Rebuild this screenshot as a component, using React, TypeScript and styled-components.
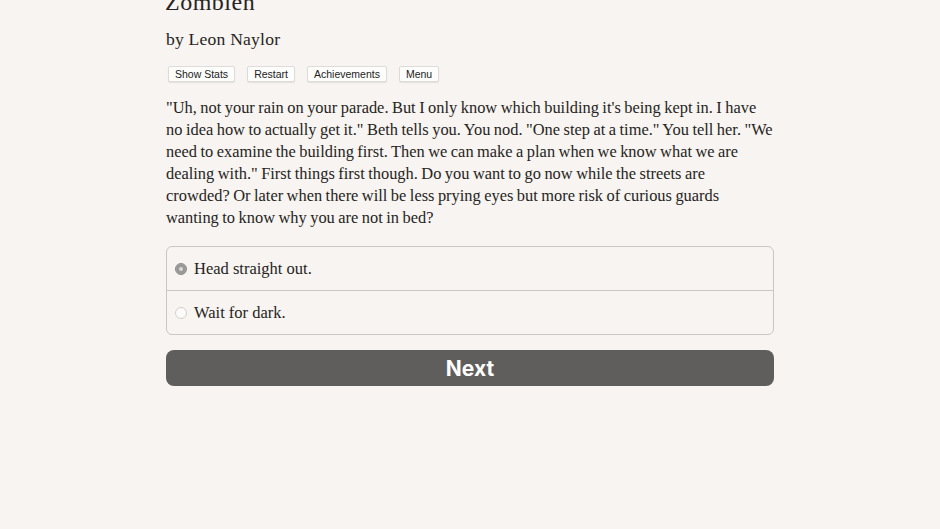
import React, { useState } from 'react'
import styled, { createGlobalStyle } from 'styled-components'

const GlobalStyle = createGlobalStyle`
  html, body {
    margin: 0;
    padding: 0;
    background: #f7f4f1;
  }
  body {
    font-family: 'Liberation Serif', 'DejaVu Serif', serif;
    color: #262422;
    overflow: hidden;
  }
`

const choices = ['Head straight out.', 'Wait for dark.']

const passage = [
  `"Uh, not your rain on your parade. But I only know which building it's being kept in. I have`,
  `no idea how to actually get it." Beth tells you. You nod. "One step at a time." You tell her. "We`,
  `need to examine the building first. Then we can make a plan when we know what we are`,
  `dealing with." First things first though. Do you want to go now while the streets are`,
  `crowded? Or later when there will be less prying eyes but more risk of curious guards`,
  `wanting to know why you are not in bed?`,
]

export default function App() {
  const [selected, setSelected] = useState(0)

  return (
    <>
      <GlobalStyle />
      <Page>
        <Title>Zombien</Title>
        <Author>by Leon Naylor</Author>

        <Toolbar>
          <ToolButton>Show Stats</ToolButton>
          <ToolButton>Restart</ToolButton>
          <ToolButton>Achievements</ToolButton>
          <ToolButton>Menu</ToolButton>
        </Toolbar>

        <Passage>
          {passage.map((line, i) => (
            <React.Fragment key={i}>
              {line}
              {i < passage.length - 1 && <br />}
            </React.Fragment>
          ))}
        </Passage>

        <ChoiceList>
          {choices.map((c, i) => (
            <Choice key={c} onClick={() => setSelected(i)}>
              <Radio checked={selected === i} />
              {c}
            </Choice>
          ))}
        </ChoiceList>

        <NextButton>Next</NextButton>
      </Page>
    </>
  )
}

const Page = styled.div`
  width: 608px;
  margin: 0 auto;
  display: flex;
  flex-direction: column;
`

const Title = styled.h1`
  margin: -12px 0 0 -1px;
  font-size: 24px;
  font-weight: 400;
  line-height: 28px;
  letter-spacing: 0.5px;
`

const Author = styled.div`
  margin-top: 12px;
  font-size: 17.6px;
  line-height: 22px;
  letter-spacing: 0.2px;
`

const Toolbar = styled.div`
  display: flex;
  gap: 12px;
  margin-top: 16px;
  padding-left: 2px;
`

const ToolButton = styled.button`
  font-family: 'Liberation Sans', Arial, sans-serif;
  font-size: 10.5px;
  color: #222;
  background: #fdfdfc;
  border: 1px solid #dedbd8;
  border-radius: 2px;
  padding: 1px 6px;
  height: 16px;
  line-height: 12px;
  box-shadow: 0 1px 1px rgba(0, 0, 0, 0.08);
`

const Passage = styled.p`
  margin: 15px 0 0;
  font-size: 16.4px;
  line-height: 22px;
  word-spacing: -0.6px;
`

const ChoiceList = styled.div`
  margin-top: 17px;
  border: 1px solid #c9c6c3;
  border-radius: 6px;
  overflow: hidden;
`

const Choice = styled.div`
  display: flex;
  align-items: center;
  gap: 7px;
  height: 43px;
  padding-left: 8px;
  font-size: 16.5px;
  cursor: pointer;

  & + & {
    border-top: 1px solid #c9c6c3;
  }
`

const Radio = styled.span<{ checked: boolean }>`
  width: 12px;
  height: 12px;
  border-radius: 50%;
  box-sizing: border-box;
  flex-shrink: 0;
  background: ${p => (p.checked ? '#9a9896' : '#fcfbfa')};
  border: 1px solid ${p => (p.checked ? '#8f8d8b' : '#d3d0cd')};
  box-shadow: ${p => (p.checked ? 'inset 0 0 0 3px #9a9896, inset 0 0 0 6px #dcdad8' : 'none')};
`

const NextButton = styled.button`
  margin-top: 15px;
  height: 36px;
  border: none;
  border-radius: 8px;
  background: #5f5e5c;
  color: #fff;
  font-family: 'Inter', 'Liberation Sans', sans-serif;
  font-weight: 700;
  font-size: 21px;
  cursor: pointer;
`
